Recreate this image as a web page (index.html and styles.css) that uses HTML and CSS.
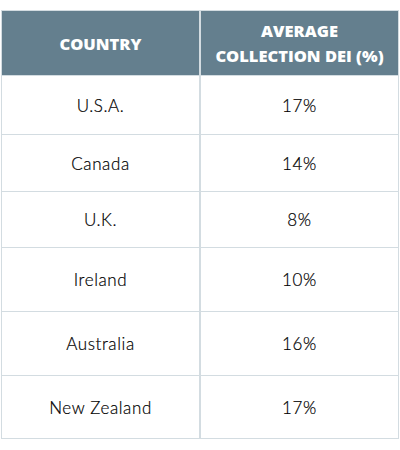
FILE: index.html
```html
<!DOCTYPE html>
<html>
<head>
<meta charset="utf-8">
<link rel="stylesheet" href="styles.css">
</head>
<body>
<div class="wrap">
<table class="dei">
  <thead>
    <tr>
      <th>COUNTRY</th>
      <th>AVERAGE<br>COLLECTION DEI (%)</th>
    </tr>
  </thead>
  <tbody>
    <tr><td>U.S.A.</td><td>17%</td></tr>
    <tr><td>Canada</td><td>14%</td></tr>
    <tr><td>U.K.</td><td>8%</td></tr>
    <tr><td>Ireland</td><td>10%</td></tr>
    <tr><td>Australia</td><td>16%</td></tr>
    <tr><td>New Zealand</td><td>17%</td></tr>
  </tbody>
</table>
</div>
</body>
</html>
```
FILE: styles.css
```css
html, body {
  margin: 0;
  padding: 0;
  background: #ffffff;
}
.wrap {
  padding: 10px 1px 0 1px;
}
.dei {
  width: 398px;
  border-collapse: collapse;
  table-layout: fixed;
  font-family: Lato, "Noto Sans", sans-serif;
}
.dei th {
  background: #647f8e;
  color: #ffffff;
  font-family: "Open Sans", sans-serif;
  font-weight: 800;
  font-size: 16.5px;
  line-height: 25px;
  height: 64px;
  padding: 0;
  text-align: center;
  border: 1px solid #d3dce1;
  border-bottom: none;
}
.dei td {
  font-size: 17px;
  font-weight: 300;
  letter-spacing: 0.6px;
  color: #000000;
  -webkit-text-stroke: 0.2px #000000;
  text-align: center;
  padding: 0;
  border: 1px solid #d3dce1;
}
.dei td + td,
.dei th + th {
  border-left-width: 2px;
}
.dei tbody tr:nth-child(1) td { height: 58px; }
.dei tbody tr:nth-child(2) td { height: 56px; }
.dei tbody tr:nth-child(3) td { height: 55px; }
.dei tbody tr:nth-child(4) td { height: 63px; }
.dei tbody tr:nth-child(5) td { height: 63px; }
.dei tbody tr:nth-child(6) td { height: 62px; }
```
